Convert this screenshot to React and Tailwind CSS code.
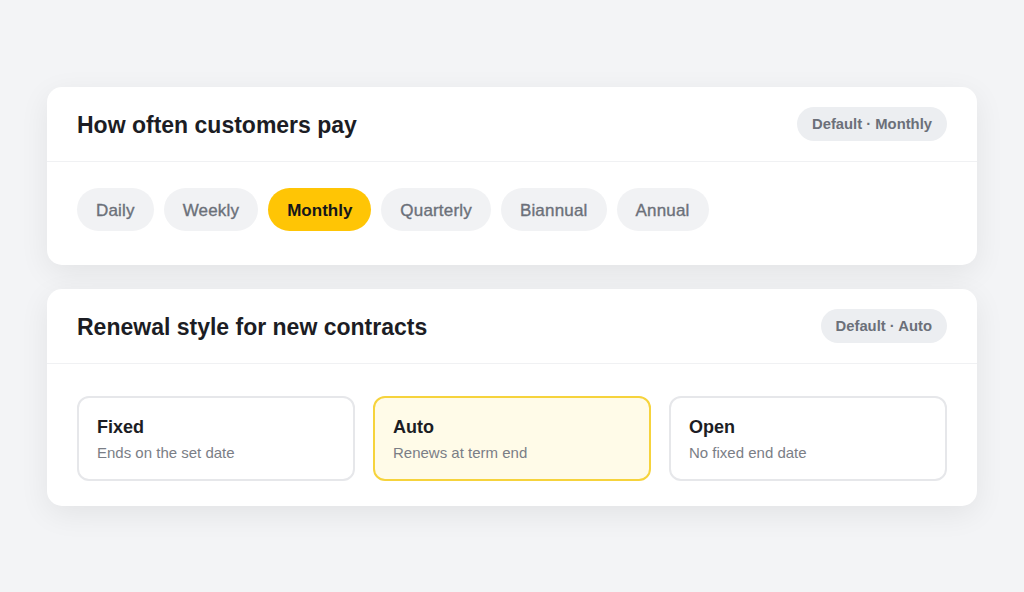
import React from "react";

const freqs = ["Daily", "Weekly", "Monthly", "Quarterly", "Biannual", "Annual"];
const options = [
  { t: "Fixed", s: "Ends on the set date" },
  { t: "Auto", s: "Renews at term end", sel: true },
  { t: "Open", s: "No fixed end date" },
];

function Header({ title, badge }) {
  return (
    <div className="flex items-center justify-between h-[75px] px-[30px] border-b border-[#f0f1f3]">
      <h2 className="text-[23px] leading-[28px] font-bold text-[#1c1d24] mt-[2px]">{title}</h2>
      <span className="h-[34px] px-[15px] pt-[2px] flex items-center rounded-full bg-[#eceef1] text-[14.8px] font-bold text-[#6b7079]">
        {badge}
      </span>
    </div>
  );
}

export default function App() {
  return (
    <div
      className="w-[1024px] h-[592px] bg-[#f3f4f6] flex flex-col items-center justify-center gap-[24px]"
      style={{ fontFamily: '"Liberation Sans", Arial, sans-serif' }}
    >
      <div className="w-[930px] bg-white rounded-[15px] shadow-[0_8px_30px_rgba(0,0,0,0.07)]">
        <Header title="How often customers pay" badge="Default · Monthly" />
        <div className="flex gap-[10px] px-[30px] pt-[26px] pb-[34px]">
          {freqs.map((f) =>
            f === "Monthly" ? (
              <span key={f} className="h-[43px] px-[19px] pt-[3px] flex items-center rounded-full bg-[#ffc505] text-[17px] font-bold text-[#15161b]">
                {f}
              </span>
            ) : (
              <span key={f} className="h-[43px] px-[19px] pt-[3px] flex items-center rounded-full bg-[#f1f2f4] text-[17px] tracking-[0.18px] text-[#6b7079] [-webkit-text-stroke:0.35px_#6b7079]">
                {f}
              </span>
            )
          )}
        </div>
      </div>
      <div className="w-[930px] bg-white rounded-[15px] shadow-[0_8px_30px_rgba(0,0,0,0.07)]">
        <Header title="Renewal style for new contracts" badge="Default · Auto" />
        <div className="grid grid-cols-3 gap-[18px] px-[30px] pt-[32px] pb-[25px]">
          {options.map((o) => (
            <div
              key={o.t}
              className={
                o.sel
                  ? "rounded-[12px] border-2 border-[#f6d33c] bg-[#fffbe8] px-[18px] pt-[18px] pb-[16px]"
                  : "rounded-[12px] border-2 border-[#e6e7ea] bg-white px-[18px] pt-[18px] pb-[16px]"
              }
            >
              <div className="text-[18px] leading-[22px] font-bold text-[#1c1d24]">{o.t}</div>
              <div className="mt-[5px] text-[15px] leading-[20px] text-[#7a7e86]">{o.s}</div>
            </div>
          ))}
        </div>
      </div>
    </div>
  );
}
